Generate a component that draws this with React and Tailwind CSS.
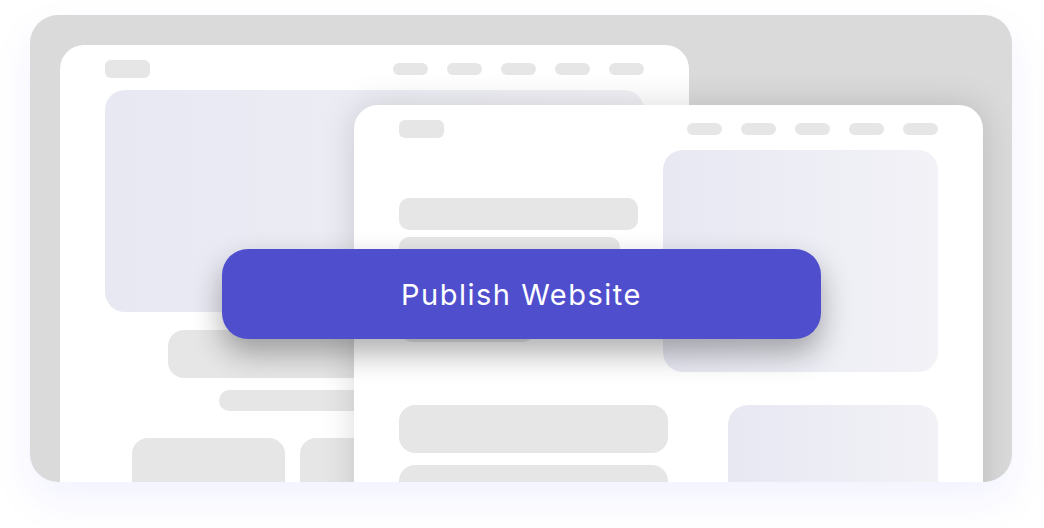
export default function App() {
  const navPills = [0, 1, 2, 3, 4];

  return (
    <div className="min-h-screen bg-white pt-[15px] pl-[30px]" style={{ fontFamily: 'Inter, "Noto Sans", sans-serif' }}>
      {/* grey canvas */}
      <div className="relative h-[467px] w-[982px] overflow-hidden rounded-[28px] bg-[#dadada] shadow-[0_18px_40px_rgba(110,110,255,0.09)]">
        {/* back window */}
        <div className="absolute left-[30px] top-[30px] h-[520px] w-[629px] rounded-t-[24px] bg-white px-[45px] pt-[15px]">
          <div className="flex items-center justify-between">
            <div className="h-[18px] w-[45px] rounded-[6px] bg-[#e6e6e6]" />
            <div className="flex gap-[19px]">
              {navPills.map((i) => (
                <div key={i} className="h-[12px] w-[35px] rounded-full bg-[#e6e6e6]" />
              ))}
            </div>
          </div>
          <div className="mt-[12px] h-[222px] rounded-[20px] bg-gradient-to-r from-[#e8e8f3] to-[#f1f1f6]" />
          <div className="mx-auto mt-[18px] h-[48px] w-[413px] rounded-[16px] bg-[#e6e6e6]" />
          <div className="mx-auto mt-[12px] h-[21px] w-[311px] rounded-full bg-[#e6e6e6]" />
          <div className="mt-[27px] flex justify-center gap-[15px] pl-[4px]">
            <div className="h-[110px] w-[153px] rounded-[16px] bg-[#e6e6e6]" />
            <div className="h-[110px] w-[153px] rounded-[16px] bg-[#e6e6e6]" />
            <div className="h-[110px] w-[153px] rounded-[16px] bg-[#e6e6e6]" />
          </div>
        </div>

        {/* front window */}
        <div className="absolute left-[324px] top-[90px] h-[460px] w-[629px] rounded-t-[24px] bg-white px-[45px] pt-[15px] shadow-[0_0_34px_rgba(0,0,0,0.15)]">
          <div className="flex items-center justify-between">
            <div className="h-[18px] w-[45px] rounded-[6px] bg-[#e6e6e6]" />
            <div className="flex gap-[19px]">
              {navPills.map((i) => (
                <div key={i} className="h-[12px] w-[35px] rounded-full bg-[#e6e6e6]" />
              ))}
            </div>
          </div>
          <div className="mt-[12px] flex justify-between">
            <div className="flex w-[239px] flex-col pt-[48px]">
              <div className="h-[32px] w-[239px] rounded-[10px] bg-[#e6e6e6]" />
              <div className="mt-[7px] h-[32px] w-[221px] rounded-[10px] bg-[#e6e6e6]" />
              <div className="mt-[25px] h-[48px] w-[137px] rounded-[14px] bg-[#e6e6e6]" />
            </div>
            <div className="h-[222px] w-[275px] rounded-[20px] bg-gradient-to-r from-[#e8e8f3] to-[#f2f2f7]" />
          </div>
          <div className="mt-[33px] flex justify-between">
            <div className="flex flex-col gap-[12px]">
              <div className="h-[48px] w-[269px] rounded-[16px] bg-[#e6e6e6]" />
              <div className="h-[48px] w-[269px] rounded-[16px] bg-[#e6e6e6]" />
            </div>
            <div className="h-[160px] w-[210px] rounded-[20px] bg-gradient-to-r from-[#e8e8f3] to-[#f1f1f6]" />
          </div>
        </div>

        {/* publish button */}
        <button
          type="button"
          className="absolute left-[192px] top-[234px] flex h-[90px] w-[599px] items-center justify-center rounded-[26px] bg-[#4f4fce] pt-[2px] text-[29px] tracking-[1.5px] text-white shadow-[0_14px_30px_rgba(0,0,0,0.32)]"
        >
          Publish Website
        </button>
      </div>
    </div>
  );
}
